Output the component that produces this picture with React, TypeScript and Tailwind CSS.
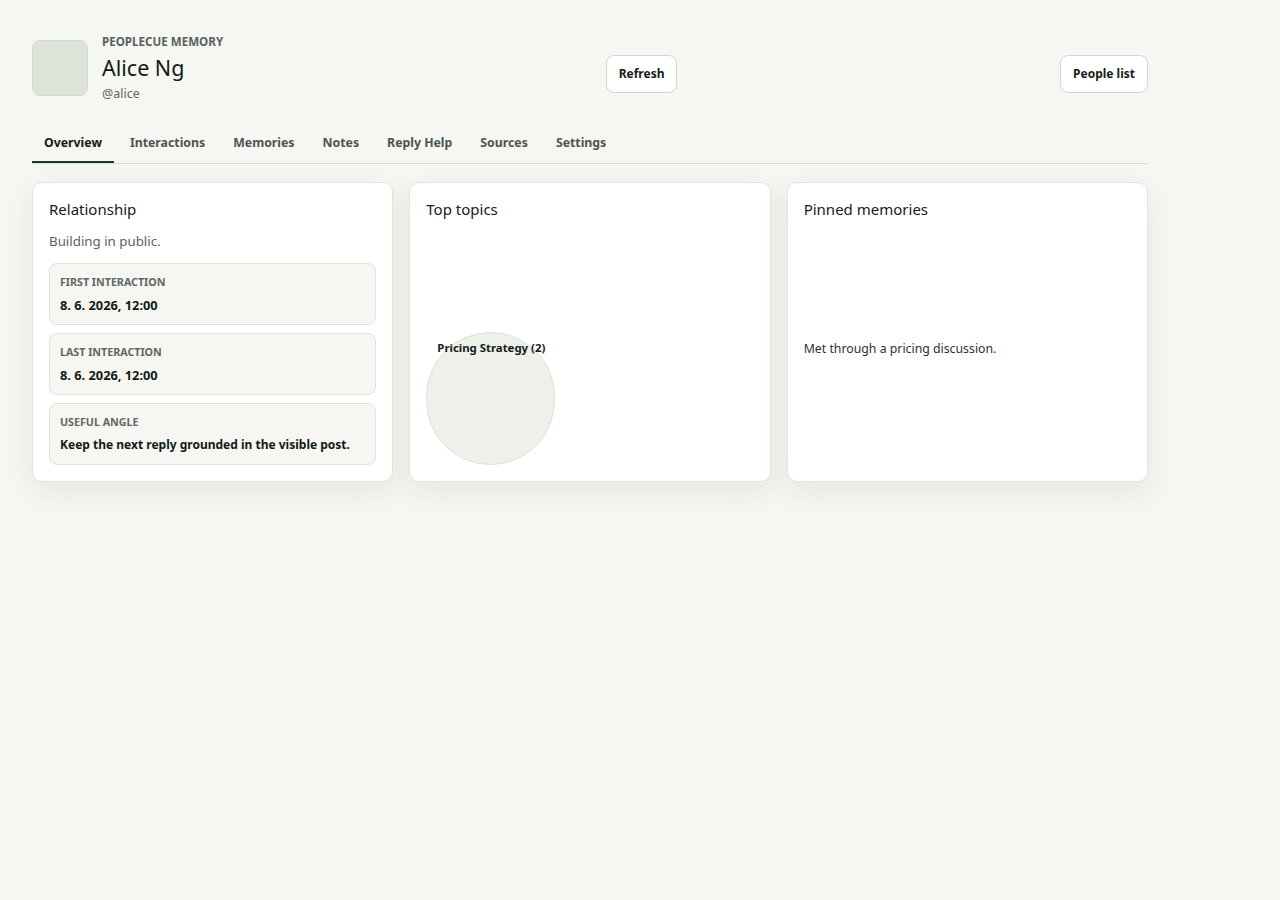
import React from "react";

const tabs = ["Overview", "Interactions", "Memories", "Notes", "Reply Help", "Sources", "Settings"];

const facts = [
  { label: "First interaction", value: "8. 6. 2026, 12:00", size: "text-[12.8px]" },
  { label: "Last interaction", value: "8. 6. 2026, 12:00", size: "text-[12.8px]" },
  { label: "Useful angle", value: "Keep the next reply grounded in the visible post.", size: "text-[12px]" },
];

const Card = ({ title, children }: { title: string; children: React.ReactNode }) => (
  <section className="flex h-[300px] flex-col rounded-[10px] border border-[#e2e5de] bg-white p-4 shadow-[0_10px_30px_rgba(40,60,40,0.08)]">
    <h2 className="text-[15px] leading-5 text-[#15201b]">{title}</h2>
    {children}
  </section>
);

export default function App() {
  return (
    <div
      className="min-h-screen bg-[#f6f6f2] text-[#15201b]"
      style={{ fontFamily: '"Noto Sans", "Open Sans", sans-serif' }}
    >
      <div className="ml-8 w-[1116px] pt-[34px]">
        <header className="flex items-start justify-between">
          <div className="flex items-center gap-[14px]">
            <div className="h-14 w-14 rounded-lg border border-[#d3dbd0] bg-[#dde4da]" />
            <div className="flex flex-col">
              <span className="text-[11.6px] font-bold uppercase leading-4 text-[#56625e]">PeopleCue Memory</span>
              <h1 className="mt-1 text-[21.5px] leading-7 text-[#111a16]">Alice Ng</h1>
              <span className="mt-1 text-[12.5px] leading-4 text-[#5d6864]">@alice</span>
            </div>
          </div>
          <button className="mt-[21px] h-[38px] rounded-lg border border-[#cfd8cf] bg-white px-3 text-[12px] font-bold text-[#15201b]">
            Refresh
          </button>
          <button className="mt-[21px] h-[38px] rounded-lg border border-[#cfd8cf] bg-white px-3 text-[12px] font-bold text-[#15201b]">
            People list
          </button>
        </header>

        <nav className="mt-6 flex gap-1 border-b border-[#dcdcd6]">
          {tabs.map((t, i) => (
            <div
              key={t}
              className={
                i === 0
                  ? "border-b-2 border-[#1f3a2c] px-3 pb-[9px] pt-2 text-[12.3px] font-bold leading-[18px] text-[#111a16]"
                  : "border-b-2 border-transparent px-3 pb-[9px] pt-2 text-[12.3px] font-bold leading-[18px] text-[#4a5551]"
              }
            >
              {t}
            </div>
          ))}
        </nav>

        <div className="mt-[18px] grid grid-cols-3 gap-4">
          <Card title="Relationship">
            <p className="mt-3 text-[13.3px] leading-5 text-[#5a6460]">Building in public.</p>
            <div className="mt-3 flex flex-col gap-2">
              {facts.map((f) => (
                <div
                  key={f.label}
                  className="flex flex-col gap-[6px] rounded-lg border border-[#e2e2dc] bg-[#f6f6f2] px-[10px] pb-[10px] pt-[10px]"
                >
                  <span className="text-[10.7px] font-bold uppercase leading-4 text-[#5d6864]">{f.label}</span>
                  <span className={`${f.size} whitespace-nowrap font-bold leading-[18px] text-[#111a16]`}>{f.value}</span>
                </div>
              ))}
            </div>
          </Card>

          <Card title="Top topics">
            <div className="flex flex-1 items-end">
              <div className="relative h-[133px] w-[129px] rounded-full border border-[#dfe2da] bg-[#eef0ea]">
                <span className="absolute left-[10px] top-[7px] whitespace-nowrap text-[11.4px] font-bold leading-4 text-[#15201b]">
                  Pricing Strategy (2)
                </span>
              </div>
            </div>
          </Card>

          <Card title="Pinned memories">
            <div className="flex flex-1 items-center pt-[14px]">
              <p className="text-[12.3px] leading-5 text-[#2a3430]">Met through a pricing discussion.</p>
            </div>
          </Card>
        </div>
      </div>
    </div>
  );
}
